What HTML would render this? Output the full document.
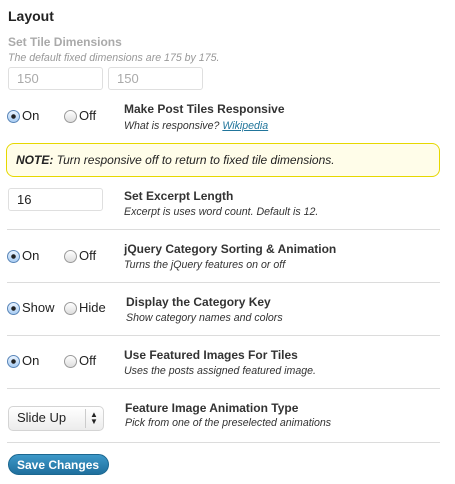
<!DOCTYPE html>
<html><head><meta charset="utf-8"><style>
*{margin:0;padding:0;box-sizing:border-box}
body{width:455px;height:484px;background:#fff;font-family:"Liberation Sans",Arial,sans-serif;color:#333;position:relative;overflow:hidden}
.a{position:absolute;white-space:nowrap}
.h{font-size:12px;font-weight:bold;line-height:15px;color:#333}
.s{font-size:10.6px;font-style:italic;line-height:13px;color:#333}
.r{position:absolute;width:13px;height:13px;border-radius:50%;border:1px solid #9a9a9a;background:linear-gradient(#fff,#ddd)}
.r.on{border-color:#5a86b8;background:radial-gradient(circle,#222 0 2px,transparent 2.5px),linear-gradient(#e9f3ff,#a9cdf3)}
.l{font-size:13px;line-height:15px;color:#222}
.line{position:absolute;left:7px;width:433px;height:1px;background:#dcdcdc}
.inp{position:absolute;height:23px;border:1px solid #dfdfdf;border-radius:3px;background:#fff;font-size:13px;padding:3px 0 0 8px}
</style></head><body>
<div class="a" style="left:8px;top:7px;font-size:14px;font-weight:bold;color:#222;line-height:18px">Layout</div>
<div class="a h" style="left:8px;top:35px;color:#aaa">Set Tile Dimensions</div>
<div class="a s" style="left:8px;top:52px;color:#999">The default fixed dimensions are 175 by 175.</div>
<div class="inp" style="left:8px;top:67px;width:95px;color:#aaa">150</div>
<div class="inp" style="left:108px;top:67px;width:95px;color:#aaa">150</div>

<div class="r on" style="left:7px;top:110px"></div><div class="a l" style="left:22px;top:108px">On</div>
<div class="r" style="left:64px;top:110px"></div><div class="a l" style="left:79px;top:108px">Off</div>
<div class="a h" style="left:124px;top:102px">Make Post Tiles Responsive</div>
<div class="a s" style="left:124px;top:120px">What is responsive? <span style="color:#21759b;text-decoration:underline">Wikipedia</span></div>

<div style="position:absolute;left:6px;top:143px;width:434px;height:34px;border:1px solid #e6d800;border-radius:8px;background:#fffde9"></div>
<div class="a" style="left:16px;top:153px;font-size:12px;font-style:italic;line-height:14px;color:#222"><b>NOTE:</b> Turn responsive off to return to fixed tile dimensions.</div>

<div class="inp" style="left:8px;top:188px;width:95px;color:#222">16</div>
<div class="a h" style="left:124px;top:189px">Set Excerpt Length</div>
<div class="a s" style="left:124px;top:206px">Excerpt is uses word count. Default is 12.</div>
<div class="line" style="top:229px"></div>

<div class="r on" style="left:7px;top:250px"></div><div class="a l" style="left:22px;top:248px">On</div>
<div class="r" style="left:64px;top:250px"></div><div class="a l" style="left:79px;top:248px">Off</div>
<div class="a h" style="left:124px;top:242px">jQuery Category Sorting &amp; Animation</div>
<div class="a s" style="left:124px;top:259px">Turns the jQuery features on or off</div>
<div class="line" style="top:282px"></div>

<div class="r on" style="left:7px;top:302px"></div><div class="a l" style="left:22px;top:300px">Show</div>
<div class="r" style="left:64px;top:302px"></div><div class="a l" style="left:79px;top:300px">Hide</div>
<div class="a h" style="left:126px;top:295px">Display the Category Key</div>
<div class="a s" style="left:126px;top:312px">Show category names and colors</div>
<div class="line" style="top:335px"></div>

<div class="r on" style="left:7px;top:355px"></div><div class="a l" style="left:22px;top:353px">On</div>
<div class="r" style="left:64px;top:355px"></div><div class="a l" style="left:79px;top:353px">Off</div>
<div class="a h" style="left:124px;top:348px">Use Featured Images For Tiles</div>
<div class="a s" style="left:124px;top:365px">Uses the posts assigned featured image.</div>
<div class="line" style="top:388px"></div>

<div style="position:absolute;left:8px;top:406px;width:96px;height:25px;border:1px solid #d4d4d4;border-radius:5px;background:linear-gradient(#fff,#ececec)"></div>
<div style="position:absolute;left:85px;top:409px;width:1px;height:19px;background:#ccc"></div>
<div class="a l" style="left:17px;top:410px">Slide Up</div>
<div class="a" style="left:90px;top:411px;font-size:8px;line-height:7px;color:#222">▲<br>▼</div>
<div class="a h" style="left:125px;top:401px">Feature Image Animation Type</div>
<div class="a s" style="left:125px;top:417px">Pick from one of the preselected animations</div>
<div class="line" style="top:442px"></div>

<div style="position:absolute;left:8px;top:454px;width:101px;height:21px;border-radius:11px;background:linear-gradient(#3d98c8,#1f6f9d);border:1px solid #1b6790"></div>
<div class="a" style="left:17px;top:458px;font-size:12px;font-weight:bold;color:#fff;line-height:14px">Save Changes</div>
</body></html>
